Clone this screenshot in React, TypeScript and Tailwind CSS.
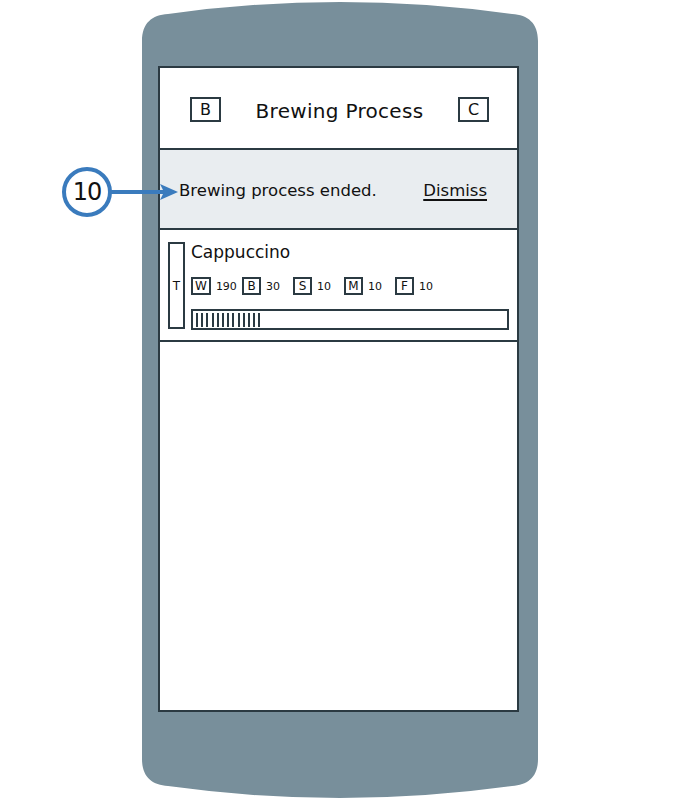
import React from "react";

const font = { fontFamily: '"DejaVu Sans", "Liberation Sans", sans-serif' };

function Badge({ letter, value }: { letter: string; value: string }) {
  return (
    <div className="w-[51px] flex items-center">
      <div className="h-[18px] min-w-[19px] px-[2px] border-2 border-[#2b3a42] flex items-center justify-center text-[12px] leading-none text-[#111]">
        {letter}
      </div>
      <span className="ml-[5px] text-[11px] leading-none text-[#111]">{value}</span>
    </div>
  );
}

export default function App() {
  const ticks = Array.from({ length: 13 });
  return (
    <div
      className="relative w-[680px] h-[801px] bg-white flex justify-center pt-px"
      style={font}
    >
      <div className="w-[396px] h-[798px] bg-[#788f9b] [clip-path:path('M0,40C0,22,10,14,26,13Q198,-11,370,13C386,14,396,22,396,40L396,758C396,776,386,784,370,785Q198,809,26,785C10,784,0,776,0,758Z')] pt-[65px] pl-[16px]">
        <div className="w-[361px] h-[646px] border-2 border-[#2b3a42] bg-white flex flex-col">
          {/* Header */}
          <div className="h-[80px] flex items-center justify-between pl-[30px] pr-[28px] pt-[3px]">
            <div className="w-[31px] h-[25px] border-2 border-[#2b3a42] flex items-center justify-center text-[16px] text-[#111]">
              B
            </div>
            <div className="text-[20px] text-[#111] tracking-[0.3px] pt-[2px]">Brewing Process</div>
            <div className="w-[31px] h-[25px] border-2 border-[#2b3a42] flex items-center justify-center text-[16px] text-[#111]">
              C
            </div>
          </div>
          {/* Notification */}
          <div className="h-[82px] border-y-2 border-[#2b3a42] bg-[#e9edf0] flex items-center justify-between pl-[19px] pr-[30px] pt-[4px]">
            <span className="text-[16.5px] text-[#111]">Brewing process ended.</span>
            <span className="text-[16.5px] text-[#111] underline underline-offset-[3px] decoration-[1.5px]">
              Dismiss
            </span>
          </div>
          {/* Card */}
          <div className="h-[112px] border-b-2 border-[#2b3a42] flex pl-[8px] pr-[8px] pt-[12px] gap-[6px]">
            <div className="w-[17px] h-[87px] border-2 border-[#2b3a42] flex items-center justify-center text-[12px] text-[#111]">
              T
            </div>
            <div className="flex-1 flex flex-col">
              <div className="text-[17px] leading-[20px] text-[#111]">Cappuccino</div>
              <div className="mt-[15px] flex">
                <Badge letter="W" value="190" />
                <Badge letter="B" value="30" />
                <Badge letter="S" value="10" />
                <Badge letter="M" value="10" />
                <Badge letter="F" value="10" />
              </div>
              <div className="mt-[14px] h-[21px] border-2 border-[#2b3a42] flex items-center pl-[3px] gap-[3.2px]">
                {ticks.map((_, i) => (
                  <div key={i} className="w-[2px] h-[14px] bg-[#2b3a42]" />
                ))}
              </div>
            </div>
          </div>
          <div className="flex-1" />
        </div>
      </div>

      {/* Callout */}
      <div className="absolute left-[62px] top-[167px] w-[50px] h-[50px] rounded-full border-4 border-[#3a7bbd] bg-white flex items-center justify-center text-[24px] text-[#111] tracking-[-1px]">
        10
      </div>
      <svg className="absolute left-[110px] top-[181px]" width="70" height="22" viewBox="0 0 70 22">
        <path d="M0 11 L58 11" stroke="#3a7bbd" strokeWidth="4" />
        <path d="M50 3 L68 11 L50 19 L54 11 Z" fill="#3a7bbd" />
      </svg>
    </div>
  );
}
